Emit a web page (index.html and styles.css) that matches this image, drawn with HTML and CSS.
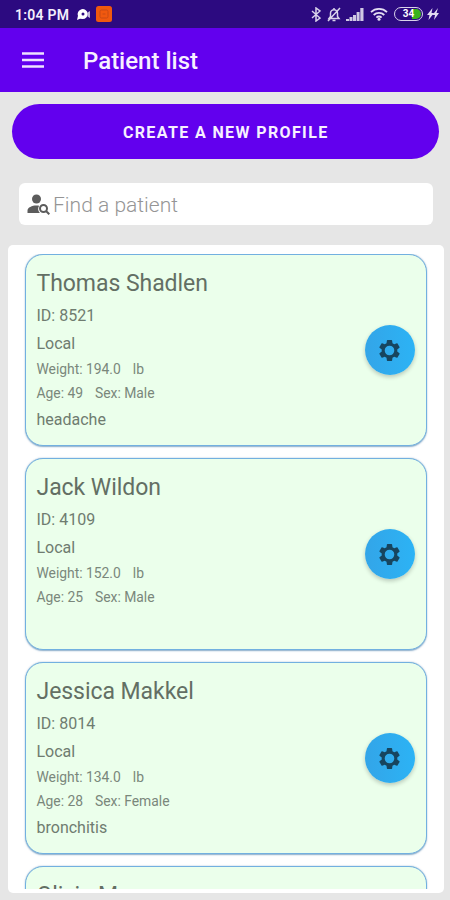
FILE: index.html
```html
<!DOCTYPE html>
<html lang="en">
<head>
<meta charset="utf-8">
<title>Patient list</title>
<link rel="stylesheet" href="styles.css">
</head>
<body>
<svg class="defs" aria-hidden="true">
  <symbol id="gear" viewBox="0 0 24 24"><path fill-rule="evenodd" d="M19.43 12.98c.04-.32.07-.64.07-.98s-.03-.66-.07-.98l2.11-1.65c.19-.15.24-.42.12-.64l-2-3.46c-.12-.22-.39-.3-.61-.22l-2.49 1c-.52-.4-1.08-.73-1.69-.98l-.38-2.65A.49.49 0 0 0 14 2h-4c-.25 0-.46.18-.49.42l-.38 2.65c-.61.25-1.17.59-1.69.98l-2.49-1c-.23-.09-.49 0-.61.22l-2 3.46c-.13.22-.07.49.12.64l2.11 1.65c-.04.32-.07.65-.07.98s.03.66.07.98l-2.11 1.65c-.19.15-.24.42-.12.64l2 3.46c.12.22.39.3.61.22l2.49-1c.52.4 1.08.73 1.69.98l.38 2.65c.03.24.24.42.49.42h4c.25 0 .46-.18.49-.42l.38-2.65c.61-.25 1.17-.59 1.69-.98l2.49 1c.23.09.49 0 .61-.22l2-3.46c.12-.22.07-.49-.12-.64zM12 16.6a4.6 4.6 0 1 1 0-9.2 4.6 4.6 0 0 1 0 9.2z"/></symbol>
</svg>
<div class="screen">
  <header class="status">
    <span class="time">1:04 PM</span>
    <svg class="cam" viewBox="0 0 15 13"><path d="M1 12l1-4.200A5 5 0 1 1 6.500 11L4 10.800z"/><path d="M11.500 4.500l2.500-1.500v7l-2.500-1.500z" opacity=".7"/><circle cx="7" cy="6" r="1.500" class="cam-dot"/></svg>
    <svg class="app" viewBox="0 0 16 16"><rect width="16" height="16" rx="2.500" fill="#f0590f"/><path d="M5.500 4h5a1.500 1.500 0 0 1 1.500 1.500v5a1.500 1.500 0 0 1-1.500 1.500h-5A1.500 1.500 0 0 1 4 10.500v-5A1.500 1.500 0 0 1 5.500 4zM6.500 8h3" fill="none" stroke="#c94a14"/></svg>
    <span class="grow"></span>
    <svg class="bt" viewBox="0 0 10 15"><path d="M1 4l8 7-4 3V1l4 3-8 7"/></svg>
    <svg class="bell" viewBox="0 0 14 15"><path d="M2 11.500h10l-1.500-2V6.300a3.500 3.500 0 0 0-7 0v3.200zM5.500 13.500h3M7 1v2M13 1L1 14"/></svg>
    <svg class="signal" viewBox="0 0 18 13"><path d="M0 13v-2h3v2zM3.500 13V9h3v4zM7 13V7h3v6zM10.600 13V4h3v9zM14.300 13V0h3.200v13z"/></svg>
    <svg class="wifi" viewBox="0 0 18 14"><path d="M1 5.200a11.500 11.500 0 0 1 16 0M3.700 8a7.500 7.500 0 0 1 10.600 0M6.400 10.600a3.600 3.600 0 0 1 5.200 0"/><circle cx="9" cy="12.300" r="1.500"/></svg>
    <span class="battery"><span class="level">34</span></span>
    <svg class="bolt" viewBox="0 0 12 12"><path d="M5.500 0L0 7h2.500L1.500 12 7 5H4.500zM11 0L5.500 7H8L7 12l5-7h-2.500z"/></svg>
  </header>
  <nav class="bar">
    <svg class="menu" viewBox="0 0 22 16"><path d="M0 1.500h22M0 8h22M0 14.500h22"/></svg>
    <h1 class="title">Patient list</h1>
  </nav>
  <main class="content">
    <button class="create">CREATE A NEW PROFILE</button>
    <label class="search">
      <svg viewBox="0 0 23 21"><circle cx="9.500" cy="5" r="4.500"/><path d="M.5 19v-2.500c0-3 4.500-5 9-5 .9 0 1.800.1 2.600.3a6 6 0 0 0 .8 7.200z"/><circle class="lens" cx="16.500" cy="14.500" r="3.500"/><path class="lens" d="M19 17l3.300 3.300"/></svg>
      <span>Find a patient</span>
    </label>
    <section class="panel">
      <div class="list">
        <article class="card">
          <div class="info">
            <h2>Thomas Shadlen</h2>
            <p class="id">ID: 8521</p>
            <p class="place">Local</p>
            <p class="small"><span class="first">Weight: 194.0</span><span>lb</span></p>
            <p class="small"><span class="first">Age: 49</span><span>Sex: Male</span></p>
            <p class="note">headache</p>
          </div>
          <button class="gear" aria-label="Settings"><svg><use href="#gear"/></svg></button>
        </article>
        <article class="card">
          <div class="info">
            <h2>Jack Wildon</h2>
            <p class="id">ID: 4109</p>
            <p class="place">Local</p>
            <p class="small"><span class="first">Weight: 152.0</span><span>lb</span></p>
            <p class="small"><span class="first">Age: 25</span><span>Sex: Male</span></p>
          </div>
          <button class="gear" aria-label="Settings"><svg><use href="#gear"/></svg></button>
        </article>
        <article class="card">
          <div class="info">
            <h2>Jessica Makkel</h2>
            <p class="id">ID: 8014</p>
            <p class="place">Local</p>
            <p class="small"><span class="first">Weight: 134.0</span><span>lb</span></p>
            <p class="small"><span class="first">Age: 28</span><span>Sex: Female</span></p>
            <p class="note">bronchitis</p>
          </div>
          <button class="gear" aria-label="Settings"><svg><use href="#gear"/></svg></button>
        </article>
        <article class="card">
          <div class="info">
            <h2>Olivia M</h2>
          </div>
        </article>
      </div>
    </section>
  </main>
</div>
</body>
</html>
```

FILE: styles.css
```css
* { box-sizing: border-box; margin: 0; }
body { font-family: Roboto, sans-serif; background: #e6e6e6; }
.defs { display: none; }
.screen { width: 450px; height: 900px; overflow: hidden; display: flex; flex-direction: column; }

.status { height: 28px; flex: none; background: #2c0a80; color: #f3effc; display: flex; align-items: center; padding: 0 11px 0 15px; fill: #e4def2; }
.status svg { flex: none; }
.time { font-size: 14px; font-weight: 600; letter-spacing: .25px; width: 61px; white-space: nowrap; line-height: 28px; padding-top: 1px; }
.cam { width: 15px; height: 13px; fill: #fff; }
.cam-dot { fill: #2c0a80; }
.app { width: 16px; height: 16px; margin-left: 5px; }
.grow { flex: 1; }
.bt, .bell { fill: none; stroke: #d9d2ea; stroke-width: 1.5; }
.bt { width: 10px; height: 15px; margin-right: 6px; }
.bell { width: 14px; height: 15px; margin-right: 5px; }
.signal { width: 18px; height: 13px; margin-right: 6px; fill: #d0c8e4; }
.wifi { width: 18px; height: 14px; margin-right: 6px; stroke: #e4def2; stroke-width: 1.8; }
.wifi path { fill: none; }
.wifi circle { stroke: none; }
.battery { width: 29px; height: 14px; border: 1.5px solid #d9d2ea; border-radius: 7px; padding: 1px; margin-right: 4px; display: flex; }
.level { flex: 1; border-radius: 5px; background: linear-gradient(90deg, #2c0a80 64%, #38b31a 64%); color: #fff; font-size: 10px; line-height: 10px; font-weight: 700; text-align: center; }
.bolt { width: 12px; height: 12px; }

.bar { height: 64px; flex: none; background: #6200ee; display: flex; align-items: center; padding: 2px 22px 0; }
.menu { width: 22px; height: 16px; stroke: #eee2ff; stroke-width: 2.3; margin-top: -3px; }
.title { margin-left: 39px; color: #f7f0ff; font-size: 24px; line-height: 30px; font-weight: 500; }

.content { flex: 1; min-height: 0; display: flex; flex-direction: column; padding: 12px 6.500px 7px 8px; background: #e6e6e6; }
.create { flex: none; height: 54.500px; margin: 0 5px 0 4px; border: 0; border-radius: 28px; background: #6200ee; color: #f7f0ff; font: 700 16px Roboto, sans-serif; letter-spacing: 1.380px; padding: 2px 0 0 1px; }
.search { flex: none; height: 42px; margin: 24.500px 11px 0 10.500px; border-radius: 6px; background: #fff; display: flex; align-items: center; padding: 0 9px 0 8.500px; gap: 3px; color: #959595; font-size: 21px; font-weight: 300; }
.search svg { width: 23px; height: 21px; fill: #5c5c5c; }
.search .lens { fill: none; stroke: #5c5c5c; stroke-width: 2; }
.search span { padding-top: 2px; letter-spacing: .02px; }

.panel { margin-top: 20px; height: 648px; background: #fff; border-radius: 5px; padding: 9px 17px 4px 16.500px; }
.list { height: 100%; margin: 0 -3px; padding: 0 3px; overflow: hidden; display: flex; flex-direction: column; gap: 12px; }
.card { flex: none; height: 192px; border: 1.500px solid #72b0e0; border-radius: 18px; background: #ebffeb; display: flex; justify-content: space-between; align-items: center; padding: 0 11px; box-shadow: 0 .5px 1.500px rgba(20,90,150,.5); color: #6f7c70; }
.info { align-self: flex-start; padding-top: 11px; }
.info h2 { font-size: 23px; font-weight: 400; line-height: 36px; letter-spacing: -.05px; color: #636f64; }
.info p { line-height: 28px; font-size: 16px; white-space: nowrap; }
.info .place { margin-bottom: -1px; }
.info .small { display: flex; line-height: 24px; font-size: 13.900px; letter-spacing: -.02px; color: #7a877b; }
.info .note { padding-top: 1px; }
.first { margin-right: 12px; }
.gear { width: 50px; height: 50px; flex: none; border: 0; border-radius: 50%; background: linear-gradient(90deg, #33a5e8, #2cb3f5); box-shadow: 0 2px 4px rgba(0,0,0,.22); display: grid; place-items: center; padding: 0; }
.gear svg { width: 25px; height: 25px; fill: #17455f; }
```
